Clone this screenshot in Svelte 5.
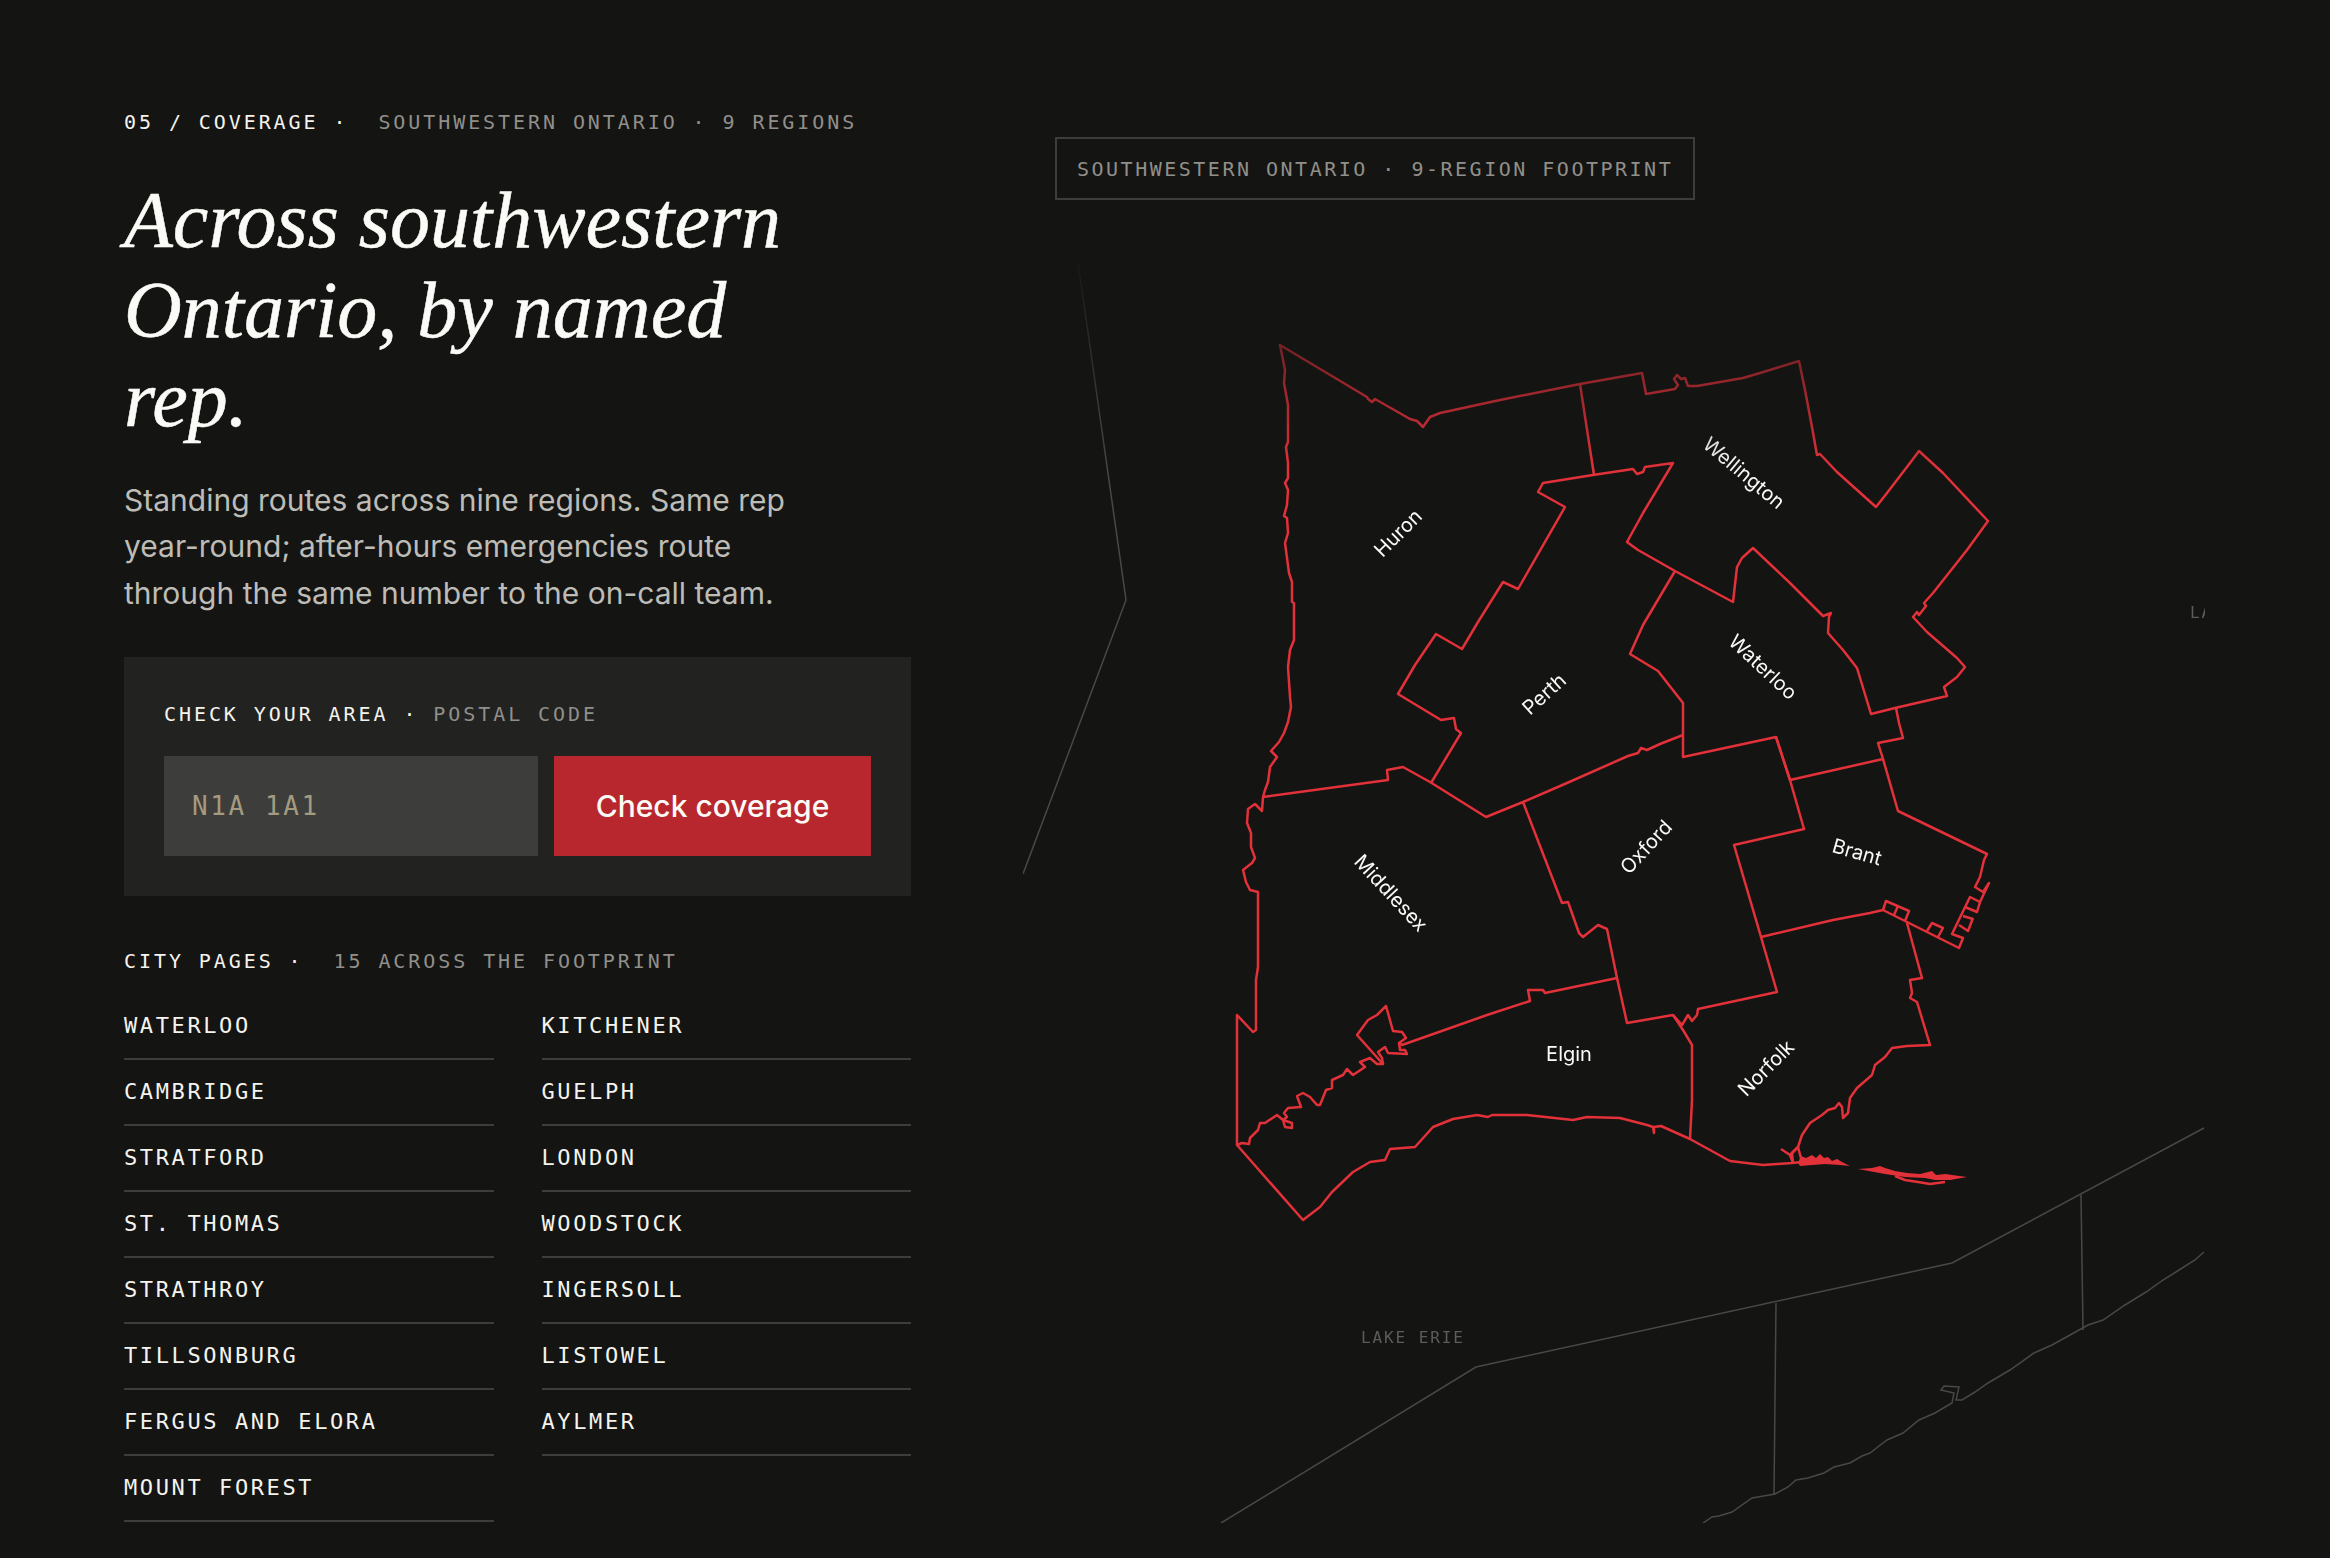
<script>
	const cities = [
		['Waterloo', 'Kitchener'],
		['Cambridge', 'Guelph'],
		['Stratford', 'London'],
		['St. Thomas', 'Woodstock'],
		['Strathroy', 'Ingersoll'],
		['Tillsonburg', 'Listowel'],
		['Fergus and Elora', 'Aylmer'],
		['Mount Forest', '']
	];

	// boundaries are traced in page pixels, the svg viewBox starts at the column's corner
	const context = [
		'1078,262 1126,600 1023,874',
		'1221,1523 1476,1367 1952,1263 2204,1128',
		'1776,1303 1774,1494',
		'2081,1195 2083,1330',
		'1703,1523 1712,1517 1719,1516 1732,1512 1752,1498 1775,1494 1788,1487 1796,1480 1808,1478 1824,1473 1834,1467 1850,1463 1862,1456 1870,1453 1879,1446 1887,1440 1903,1433 1919,1420 1935,1413 1952,1403 1954,1393 1941,1390 1944,1386 1959,1387 1956,1400 1962,1400 1975,1392 1988,1383 2010,1370 2034,1353 2052,1345 2070,1335 2088,1325 2103,1320 2125,1305 2146,1292 2163,1280 2179,1270 2195,1260 2204,1252'
	];

	const borders = [
		// north shore and top edge, huron to wellington
		'1263,797 1265,790 1268,782 1270,767 1277,757 1271,751 1279,742 1284,733 1288,722 1291,707 1290,697 1288,667 1290,650 1294,640 1294,603 1292,602 1292,582 1289,573 1285,543 1288,533 1287,518 1284,516 1287,505 1288,490 1285,483 1288,478 1288,463 1286,447 1288,442 1288,405 1284,383 1285,370 1280,345 1367,397 1368,399 1372,402 1375,399 1410,419 1417,421 1423,427 1430,417 1440,413 1500,400 1580,384 1642,373 1646,394 1675,389 1678,385 1674,379 1677,375 1681,379 1685,378 1688,386 1697,386 1743,378 1760,373 1799,361 1805,390 1812,427 1817,455 1820,454 1837,472 1876,507 1887,493 1910,463 1919,451 1943,473 1988,521 1967,550 1933,593 1924,603 1926,606 1919,615 1917,612 1913,617 1927,632 1957,658 1965,667 1957,677 1944,687 1947,696 1895,708 1871,714 1857,668 1843,650 1828,633 1829,617 1831,613 1823,616 1790,583 1753,548 1742,558 1737,567 1733,602 1675,571 1638,550 1627,542 1643,513 1673,463 1645,467 1643,472 1637,474 1633,469 1593,475 1543,483 1538,492 1565,507 1518,589 1503,582 1478,622 1462,649 1436,634 1415,665 1398,694 1441,720 1454,718 1456,729 1461,733 1431,783',
		// wellington / huron
		'1580,384 1594,475',
		// middlesex top, perth bottom
		'1263,797 1388,780 1387,770 1403,767 1430,782 1486,817 1523,802 1567,783 1628,756 1638,753 1641,748 1647,750 1660,744 1683,735',
		// waterloo
		'1675,571 1643,625 1630,654 1658,671 1683,703 1683,757 1776,737 1790,780 1883,759 1878,743 1903,738 1899,723 1896,708',
		// oxford
		'1776,737 1790,780 1804,829 1734,845 1761,937 1777,992 1698,1009 1697,1015 1692,1021 1688,1015 1682,1025 1673,1015 1627,1023 1617,978 1607,929 1598,925 1583,937 1579,933 1568,902 1562,903 1523,802',
		// brant and the comb along the grand
		'1883,759 1898,811 1987,854 1984,860 1980,877 1975,887 1983,892 1989,883 1980,902 1970,897 1952,934 1963,938 1959,948 1883,910 1886,901 1909,911 1905,921',
		'1898,906 1894,915',
		'1927,931 1932,923 1943,928 1938,937',
		'1980,902 1977,912 1965,907',
		'1973,918 1968,931 1959,925',
		'1963,916 1973,919',
		// norfolk
		'1761,937 1833,920 1870,913 1883,910',
		'1907,923 1922,978 1910,980 1912,993 1910,998 1917,1002 1930,1045 1907,1046 1892,1048 1885,1057 1875,1065 1872,1075 1857,1088 1850,1098 1848,1113 1843,1118 1842,1107 1839,1103 1835,1108 1828,1110 1822,1115 1810,1123 1802,1135 1798,1147 1792,1153 1793,1163',
		'1673,1015 1683,1030 1692,1045 1692,1100 1690,1139',
		// elgin top, thames inlet
		'1617,978 1545,993 1543,990 1528,990 1530,1001 1487,1015 1402,1045 1399,1043 1406,1038 1402,1032 1393,1031 1386,1006 1377,1015 1368,1020 1357,1035 1382,1063 1383,1064 1377,1064 1370,1058 1360,1062 1365,1067 1353,1075 1347,1069 1343,1075 1332,1080 1332,1088 1326,1090 1320,1105 1317,1105 1310,1097 1303,1093 1297,1096 1301,1107 1288,1108 1284,1113 1287,1117 1283,1120 1285,1127 1292,1128 1292,1123 1283,1120 1277,1115 1265,1123 1260,1123 1258,1130 1250,1138 1249,1144 1242,1143 1237,1145',
		'1383,1064 1382,1058 1378,1052 1385,1047 1388,1053 1407,1054 1405,1050 1400,1050 1399,1043',
		// west side and lake erie shore
		'1263,797 1262,811 1255,804 1248,809 1247,823 1251,833 1251,847 1255,858 1252,863 1243,870 1246,882 1250,890 1258,892 1258,967 1256,980 1256,1030 1253,1032 1237,1015 1237,1145 1303,1220 1320,1207 1332,1192 1353,1172 1370,1162 1385,1160 1390,1149 1415,1147 1433,1127 1453,1119 1477,1115 1488,1117 1492,1115 1527,1115 1573,1120 1587,1117 1620,1118 1647,1125 1653,1127 1654,1133 1654,1127 1661,1126 1690,1139 1730,1161 1763,1165 1777,1164 1792,1163 1802,1162',
		// long point base
		'1781,1149 1790,1155 1793,1163',
		'1790,1155 1798,1147 1802,1162'
	];

	// the two thick slivers of long point
	const spits = [
		'1798,1163 1801,1156 1806,1158 1812,1155 1816,1158 1820,1154 1824,1158 1828,1157 1832,1161 1837,1159 1842,1162 1850,1166 1840,1165 1825,1164 1800,1166',
		'1858,1169 1872,1168 1880,1166 1885,1168 1895,1171 1907,1173 1920,1174 1932,1171 1936,1175 1946,1174 1952,1175 1967,1177 1950,1180 1935,1180 1925,1178 1905,1177 1885,1174'
	];
	const spitLoop = '1895,1176 1905,1180 1918,1182 1930,1184 1945,1182';

	const labels = [
		{ name: 'Huron', x: 1398, y: 533, r: -45 },
		{ name: 'Perth', x: 1544, y: 694, r: -42 },
		{ name: 'Wellington', x: 1744, y: 473, r: 40 },
		{ name: 'Waterloo', x: 1763, y: 667, r: 43 },
		{ name: 'Middlesex', x: 1391, y: 893, r: 47 },
		{ name: 'Oxford', x: 1646, y: 847, r: -47 },
		{ name: 'Elgin', x: 1569, y: 1054, r: 0 },
		{ name: 'Brant', x: 1857, y: 852, r: 16 },
		{ name: 'Norfolk', x: 1766, y: 1068, r: -45 }
	];
</script>

<div class="page">
	<section class="left">
		<p class="eyebrow"><span class="strong">05 / COVERAGE ·</span> <span class="muted">SOUTHWESTERN ONTARIO · 9 REGIONS</span></p>
		<h1>Across southwestern Ontario, by named rep.</h1>
		<p class="lede">Standing routes across nine regions. Same rep year-round; after-hours emergencies route through the same number to the on-call team.</p>

		<div class="check">
			<p class="check-label"><span class="strong">CHECK YOUR AREA ·</span><span class="muted">POSTAL CODE</span></p>
			<div class="check-row">
				<input type="text" placeholder="N1A 1A1" />
				<button>Check coverage</button>
			</div>
		</div>

		<p class="eyebrow cities-head"><span class="strong">CITY PAGES ·</span> <span class="muted">15 ACROSS THE FOOTPRINT</span></p>
		<ul class="cities">
			{#each cities as pair}
				{#each pair as city}
					{#if city}
						<li>{city}</li>
					{/if}
				{/each}
			{/each}
		</ul>
	</section>

	<section class="right">
		<div class="map-tag">SOUTHWESTERN ONTARIO · 9-REGION FOOTPRINT</div>
		<svg class="map" viewBox="1023 108 1182 1415" width="1182" height="1415">
			{#each context as pts}
				<polyline points={pts} class="ctx" />
			{/each}
			<text x="1361" y="1343" class="lake">LAKE ERIE</text>
			<text x="2190" y="618" class="lake">LAKE HURON</text>
			{#each borders as pts}
				<polyline points={pts} class="border" />
			{/each}
			{#each spits as pts}
				<polygon points={pts} class="spit" />
			{/each}
			<polyline points={spitLoop} class="border" />
			{#each labels as l}
				<text class="region" text-anchor="middle" dominant-baseline="central" transform="translate({l.x} {l.y}) rotate({l.r})">{l.name}</text>
			{/each}
		</svg>
	</section>
</div>

<style>
	:global(body) {
		background: #141413;
	}

	.page {
		display: grid;
		grid-template-columns: 787px 1182px;
		column-gap: 112px;
		padding: 108px 0 35px 124px;
		color: #f4f3ee;
		font-family: Inter, sans-serif;
	}

	.left {
		min-width: 0;
		height: 1415px;
	}

	.eyebrow,
	.check-label {
		margin: 0;
		font-family: 'DejaVu Sans Mono', monospace;
		font-size: 20px;
		line-height: 28px;
		letter-spacing: 2.92px;
		white-space: pre-wrap;
	}

	.strong {
		color: #f4f3ee;
	}

	.muted {
		color: #918f8a;
		margin-left: 15px;
	}

	h1 {
		margin: 40px 0 0;
		font-family: 'Liberation Serif', serif;
		font-style: italic;
		font-weight: 400;
		font-size: 80px;
		line-height: 89.5px;
		max-width: 700px;
		color: #fafaf6;
		-webkit-text-stroke: 0.5px #fafaf6;
	}

	.lede {
		margin: 32px 0 0;
		font-size: 30px;
		line-height: 46.5px;
		color: #bdbcb6;
		max-width: 690px;
	}

	.check {
		margin-top: 41px;
		background: #222221;
		padding: 43px 40px 40px;
		height: 239px;
		box-sizing: border-box;
	}

	.check-row {
		display: flex;
		gap: 16px;
		margin-top: 28px;
	}

	input {
		width: 374px;
		height: 100px;
		box-sizing: border-box;
		border: 0;
		border-radius: 0;
		padding: 0 28px;
		background: #3d3d3b;
		color: #f4f3ee;
		font-family: 'DejaVu Sans Mono', monospace;
		font-size: 26px;
		letter-spacing: 2.6px;
		outline: none;
	}

	input::placeholder {
		color: #a39a80;
		opacity: 1;
	}

	button {
		flex: 1;
		border: 0;
		border-radius: 0;
		background: #b8272d;
		color: #fafaf6;
		font-family: Inter, sans-serif;
		font-size: 30px;
		font-weight: 500;
	}

	.cities-head {
		margin-top: 51px;
	}

	.cities {
		list-style: none;
		margin: 19px 0 0;
		padding: 0;
		display: grid;
		grid-template-columns: 1fr 1fr;
		column-gap: 48px;
	}

	.cities li {
		height: 66px;
		box-sizing: border-box;
		padding-top: 17px;
		border-bottom: 2px solid #3d3d3b;
		font-family: 'DejaVu Sans Mono', monospace;
		font-size: 22px;
		line-height: 30px;
		letter-spacing: 2.6px;
		color: #f4f3ee;
		text-transform: uppercase;
	}

	.right {
		position: relative;
		height: 1415px;
	}

	.map {
		display: block;
		mask-image: linear-gradient(to bottom, transparent 9.3%, #000 25.6%);
	}

	.map-tag {
		position: absolute;
		z-index: 1;
		left: 32px;
		top: 29px;
		height: 63px;
		box-sizing: border-box;
		padding: 0 20px;
		display: flex;
		align-items: center;
		border: 2px solid #3d3d3b;
		font-family: 'DejaVu Sans Mono', monospace;
		font-size: 20px;
		letter-spacing: 2.5px;
		color: #918f8a;
		white-space: nowrap;
	}

	.ctx {
		fill: none;
		stroke: #484846;
		stroke-width: 1.5;
	}

	.border {
		fill: none;
		stroke: #e3313a;
		stroke-width: 2.5;
		stroke-linejoin: round;
	}

	.spit {
		fill: #e3313a;
	}

	.lake {
		fill: #5c5c58;
		font-family: 'DejaVu Sans Mono', monospace;
		font-size: 16px;
		letter-spacing: 1.9px;
	}

	.region {
		fill: #fafaf6;
		font-family: Inter, sans-serif;
		font-size: 20px;
	}
</style>
